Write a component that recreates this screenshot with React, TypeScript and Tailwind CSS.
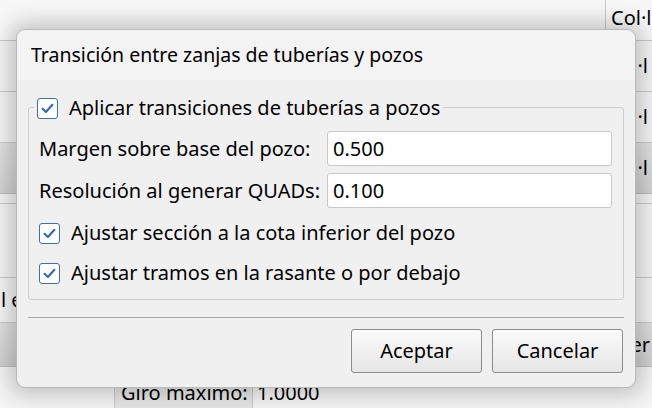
import React from 'react';

const font = { fontFamily: '"Noto Sans", "Open Sans", sans-serif' };

const Check: React.FC = () => (
  <span className="flex h-[21px] w-[21px] shrink-0 items-center justify-center rounded-[3px] border border-[#3f6fae] bg-white">
    <svg width="15" height="15" viewBox="0 0 14 14" fill="none">
      <path d="M2.4 7.3 L5.5 10.3 L11.6 3.5" stroke="#2f68b4" strokeWidth="1.9" strokeLinecap="round" strokeLinejoin="round" />
    </svg>
  </span>
);

const Field: React.FC<{ label: string; value: string }> = ({ label, value }) => (
  <div className="flex items-center">
    <span className="w-[288px] shrink-0 text-[20px] leading-[24px] text-black">{label}</span>
    <div className="flex h-[35px] flex-1 items-center rounded-[3px] border border-[#c8c8c8] bg-white px-[5px] text-[20px] text-black">
      {value}
    </div>
  </div>
);

const Button: React.FC<{ label: string }> = ({ label }) => (
  <button className="flex h-[44px] w-[131px] items-center justify-center rounded-[3px] border border-[#8c8c8c] bg-gradient-to-b from-[#fbfbfb] to-[#e6e6e6] text-[20px] text-black">
    {label}
  </button>
);

export default function App() {
  return (
    <div className="relative h-[408px] w-[652px] overflow-hidden bg-[#f4f4f4]" style={font}>
      {/* underlying table */}
      <div className="flex flex-col text-[20px] text-black">
        <div className="flex h-[41px] border-b border-[#c9c9c9] bg-[#f7f7f7]">
          <div className="w-[606px] border-r border-[#c9c9c9]" />
          <span className="pl-[5px] pt-[3px]">Col·l</span>
        </div>
        <div className="flex h-[51px] items-center justify-end border-b border-[#c9c9c9] pr-[4px]">|·l</div>
        <div className="flex h-[51px] items-center justify-end border-b border-[#c9c9c9] pr-[4px]">|·l</div>
        <div className="flex h-[51px] items-center justify-end border-b border-[#bdbdbd] bg-gradient-to-b from-[#e2e2e2] to-[#d2d2d2] pr-[4px]">|·l</div>
        <div className="h-[10px] border-b border-[#c9c9c9]" />
        <div className="h-[74px] border-b border-[#c9c9c9]" />
        <div className="flex h-[45px] items-center border-b border-[#c9c9c9]">
          <span className="pl-[1px]">l e</span>
        </div>
        <div className="flex h-[44px] items-center justify-end border-b border-[#bdbdbd] bg-gradient-to-b from-[#e0e0e0] to-[#d0d0d0] pr-[2px]">er</div>
        <div className="flex h-[41px]">
          <div className="w-[115px] border-r border-[#c9c9c9]" />
          <div className="flex w-[138px] items-center border-r border-[#c9c9c9] bg-[#e6e6e6] pl-[6px] pt-[10px]">Giro máximo:</div>
          <div className="flex items-center pl-[4px] pt-[10px]">1.0000</div>
        </div>
      </div>

      {/* dialog */}
      <div className="absolute left-[16px] top-[29px] flex h-[359px] w-[620px] flex-col rounded-[9px] border border-[#b8b8b8] bg-[#f0f0f0] shadow-[0_0_22px_6px_rgba(0,0,0,0.22)]">
        <div className="flex h-[50px] items-center rounded-t-[9px] bg-[#f3f3f3] pl-[14px] text-[19.5px] text-black">
          Transición entre zanjas de tuberías y pozos
        </div>
        <div className="flex flex-1 flex-col px-[11px]">
          <div className="relative mt-[27px] rounded-[3px] border border-[#cdcdcd]">
            <div className="absolute left-[5px] top-[-12px] flex items-center gap-[11px] bg-[#f0f0f0] px-[3px] text-[20px] text-black">
              <Check />
              <span className="leading-[24px]">Aplicar transiciones de tuberías a pozos</span>
            </div>
            <div className="flex flex-col gap-[7px] pl-[10px] pr-[11px] pt-[23px]">
              <Field label="Margen sobre base del pozo:" value="0.500" />
              <Field label="Resolución al generar QUADs:" value="0.100" />
            </div>
            <div className="flex flex-col gap-[18px] pb-[15px] pl-[10px] pt-[14px] text-[20px] text-black">
              <div className="flex items-center gap-[11px]">
                <Check />
                <span className="leading-[22px]">Ajustar sección a la cota inferior del pozo</span>
              </div>
              <div className="flex items-center gap-[11px]">
                <Check />
                <span className="leading-[22px]">Ajustar tramos en la rasante o por debajo</span>
              </div>
            </div>
          </div>
          <div className="mt-[17px] border-t border-[#a8a8a8]" />
          <div className="mt-[11px] flex justify-end gap-[10px] pr-[1px]">
            <Button label="Aceptar" />
            <Button label="Cancelar" />
          </div>
        </div>
      </div>
    </div>
  );
}
